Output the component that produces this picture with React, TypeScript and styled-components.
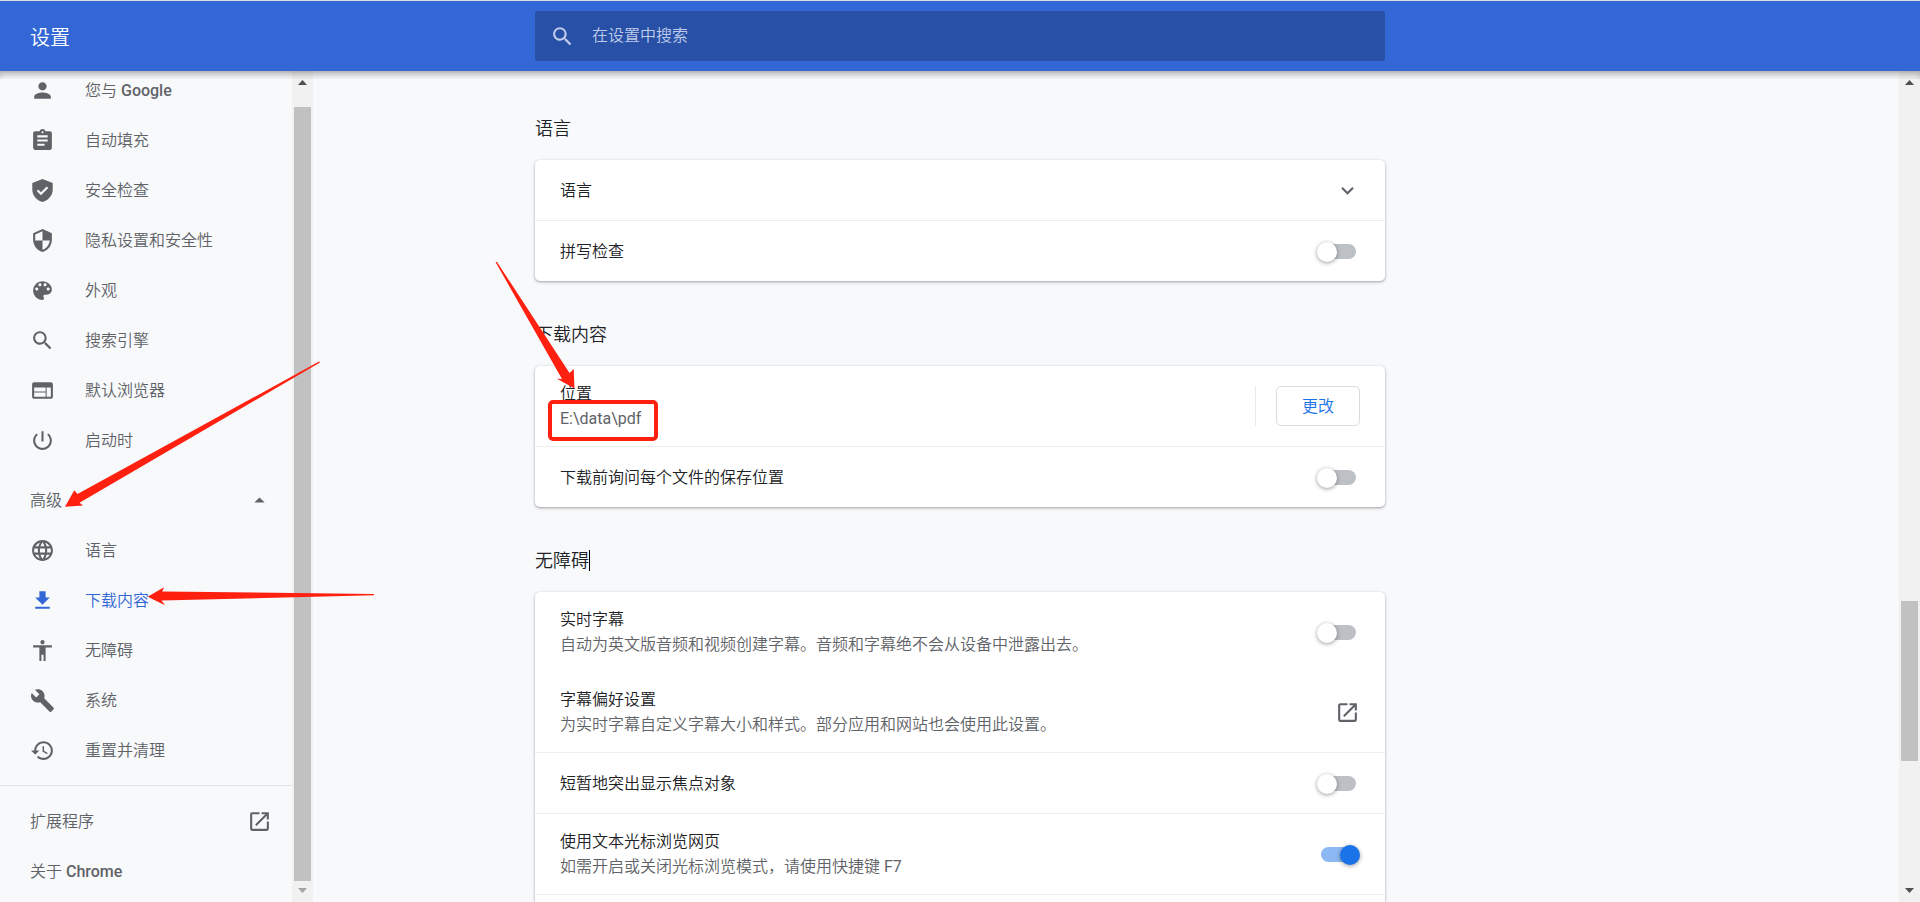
import React from 'react';
import styled, { createGlobalStyle, css } from 'styled-components';

const GlobalStyle = createGlobalStyle`
  *, *::before, *::after { box-sizing: border-box; }
  body {
    margin: 0;
    background: #f8f9fb;
    color: #202124;
    font-family: Roboto, "Noto Sans CJK SC DemiLight", "Noto Sans CJK SC Light", "Noto Sans CJK SC", sans-serif;
    font-size: 16px;
    line-height: 25px;
  }
  h1, h2, p { margin: 0; font-weight: 400; }
  a { color: inherit; text-decoration: none; }
  button, input { font: inherit; }
`;

const columns = css`
  display: grid;
  grid-template-columns: minmax(313px, 1fr) minmax(0, 850px) minmax(21px, 1fr);
`;

const Page = styled.div`
  position: relative;
  display: flex;
  flex-direction: column;
  height: 100vh;
  overflow: hidden;
`;

const Toolbar = styled.header`
  ${columns}
  flex: none;
  height: 71px;
  padding: 10px 0;
  border-top: 1px solid #dcdfe4;
  background: #3367d6;
  color: #fff;
`;

const Title = styled.h1`
  align-self: center;
  padding: 5px 30px 0;
  font-size: 20px;
`;

const SearchBox = styled.label`
  display: flex;
  align-items: center;
  gap: 17px;
  height: 50px;
  padding: 0 15px;
  border-radius: 3px;
  background: #2850a7;
  color: #bfcceb;
`;

const SearchInput = styled.input`
  flex: 1;
  min-width: 0;
  padding: 0 0 2px;
  border: 0;
  outline: 0;
  background: none;
  color: #fff;
  &::placeholder { color: #bfcceb; opacity: 1; }
`;

const Body = styled.div`
  ${columns}
  position: relative;
  flex: 1;
  min-height: 0;
`;

const TopShadow = styled.div`
  position: absolute;
  top: 0;
  left: 0;
  right: 0;
  height: 8px;
  box-shadow: inset 0 6px 8px -4px rgba(0, 0, 0, 0.4);
`;

const Sidebar = styled.aside`
  display: flex;
  width: 313px;
  min-height: 0;
`;

const Menu = styled.nav`
  flex: 1;
  overflow: hidden;
  color: #5f6368;
  font-weight: 500;
`;

const MenuGroup = styled.div<{ $scrolled?: boolean }>`
  margin-top: ${(p) => (p.$scrolled ? '-6px' : '0')};
  padding-bottom: 10px;
`;

const MenuLink = styled.a<{ $active?: boolean }>`
  display: flex;
  align-items: center;
  gap: 30px;
  height: 50px;
  padding: 0 20px 0 30px;
  color: ${(p) => (p.$active ? '#3367d6' : 'inherit')};
`;

const MenuToggle = styled.button`
  display: flex;
  align-items: center;
  justify-content: space-between;
  width: 100%;
  height: 50px;
  padding: 0 20px 0 30px;
  border: 0;
  background: none;
  color: inherit;
  text-align: left;
`;

const FooterLinks = styled.div`
  padding-top: 10px;
  border-top: 1px solid #e1e3e6;
`;

const FooterLink = styled(MenuLink)`
  justify-content: space-between;
`;

const ScrollTrack = styled.div`
  display: flex;
  flex-direction: column;
  align-items: center;
  flex: none;
  width: 21px;
  height: 100%;
  background: #f1f1f1;
`;

const ScrollSide = styled.div`
  display: flex;
  justify-content: flex-end;
  min-height: 0;
`;

const ScrollArrow = styled.div<{ $down?: boolean; $muted?: boolean }>`
  display: flex;
  align-items: center;
  justify-content: center;
  flex: none;
  width: 21px;
  height: 21px;
  padding-top: 2px;
  color: ${(p) => (p.$muted ? '#a3a3a3' : '#505050')};
  transform: ${(p) => (p.$down ? 'rotate(180deg)' : 'none')};
`;

const ScrollGap = styled.div<{ $grow: number }>`
  flex: ${(p) => p.$grow} 1 0;
`;

const ScrollThumb = styled(ScrollGap)`
  width: 17px;
  background: #c1c1c1;
`;

const Content = styled.main`
  min-width: 0;
  min-height: 0;
  overflow: hidden;
  margin: 0 -4px;
  padding: 4px 4px 0;
`;

const SectionTitle = styled.h2`
  display: flex;
  align-items: center;
  height: 85px;
  padding-top: 21px;
  font-size: 18px;
`;

const Caret = styled.span`
  width: 1px;
  height: 21px;
  background: #000;
`;

const Card = styled.div<{ $continues?: boolean }>`
  padding-bottom: ${(p) => (p.$continues ? '60px' : '0')};
  border-radius: 5px;
  background: #fff;
  box-shadow: 0 1px 2px 0 rgba(60, 64, 67, 0.3), 0 1px 3px 1px rgba(60, 64, 67, 0.15);
`;

const Row = styled.div<{ $line?: boolean; $tall?: boolean }>`
  display: flex;
  align-items: center;
  justify-content: space-between;
  box-sizing: content-box;
  min-height: ${(p) => (p.$tall ? '80px' : '60px')};
  padding: 0 25px;
  border-bottom: ${(p) => (p.$line ? '1px solid #ededed' : '0')};
`;

const RowText = styled.label`
  display: flex;
  flex-direction: column;
`;

const Secondary = styled.span`
  color: #5f6368;
`;

const IconButton = styled.button`
  display: flex;
  padding: 0;
  border: 0;
  background: none;
  color: #5f6368;
`;

const ButtonGroup = styled.div`
  display: flex;
  gap: 20px;
  height: 40px;
`;

const Separator = styled.div`
  width: 1px;
  background: #e8eaed;
`;

const ChangeButton = styled.button`
  padding: 0 25px;
  border: 1px solid #dadce0;
  border-radius: 5px;
  background: #fff;
  color: #1a73e8;
  font-weight: 500;
`;

const Switch = styled.input`
  appearance: none;
  position: relative;
  flex: none;
  width: 35px;
  height: 15px;
  margin: 0 4px 0 0;
  border-radius: 8px;
  background: #bdc1c6;
  &::after {
    content: '';
    position: absolute;
    top: -2px;
    left: -4px;
    width: 20px;
    height: 20px;
    border-radius: 50%;
    background: #fff;
    box-shadow: 0 1px 4px rgba(0, 0, 0, 0.4);
  }
  &:checked { background: #8cb8f3; }
  &:checked::after {
    left: 19px;
    background: #1a73e8;
  }
`;

const Marks = styled.svg`
  position: absolute;
  inset: 0;
  width: 100%;
  height: 100%;
  pointer-events: none;
`;

const Svg = styled.svg`
  flex: none;
  width: 25px;
  height: 25px;
  fill: currentColor;
`;

const icons = {
  person: 'M12 12c2.21 0 4-1.79 4-4s-1.79-4-4-4-4 1.79-4 4 1.79 4 4 4zm0 2c-2.67 0-8 1.34-8 4v2h16v-2c0-2.66-5.33-4-8-4z',
  autofill: 'M19 3h-4.18C14.4 1.84 13.3 1 12 1c-1.3 0-2.4.84-2.82 2H5c-1.1 0-2 .9-2 2v14c0 1.1.9 2 2 2h14c1.1 0 2-.9 2-2V5c0-1.1-.9-2-2-2zm-7 0c.55 0 1 .45 1 1s-.45 1-1 1-1-.45-1-1 .45-1 1-1zm2 14H7v-2h7v2zm3-4H7v-2h10v2zm0-4H7V7h10v2z',
  safety: 'M12 1L2.2 4.7v6.6c0 5.3 4.2 10.3 9.8 11.7 5.6-1.4 9.8-6.4 9.8-11.7V4.7L12 1zm-1.500 15.500l-4-4 1.400-1.400 2.600 2.600 5.600-5.600 1.400 1.400-7 7z',
  privacy: 'M12 1L3 5v6c0 5.550 3.840 10.740 9 12 5.160-1.260 9-6.450 9-12V5l-9-4zm0 10.990h7c-.53 4.120-3.280 7.790-7 8.940V12H5V6.300l7-3.110v8.800z',
  palette: 'M12 3c-4.970 0-9 4.030-9 9s4.030 9 9 9c.83 0 1.500-.67 1.500-1.500 0-.39-.15-.74-.39-1.010-.23-.26-.38-.61-.38-.99 0-.83.67-1.500 1.500-1.500H16c2.760 0 5-2.240 5-5 0-4.420-4.030-8-9-8zm-5.500 9c-.83 0-1.500-.67-1.500-1.500S5.670 9 6.500 9 8 9.670 8 10.500 7.330 12 6.500 12zm3-4C8.670 8 8 7.330 8 6.500S8.670 5 9.500 5s1.500.67 1.500 1.500S10.330 8 9.500 8zm5 0c-.83 0-1.500-.67-1.500-1.500S13.670 5 14.500 5s1.500.67 1.500 1.500S15.330 8 14.500 8zm3 4c-.83 0-1.500-.67-1.500-1.500S16.670 9 17.500 9s1.500.67 1.500 1.500-.67 1.500-1.500 1.500z',
  search: 'M15.500 14h-.79l-.28-.27C15.410 12.590 16 11.110 16 9.500 16 5.910 13.090 3 9.500 3S3 5.910 3 9.500 5.910 16 9.500 16c1.610 0 3.090-.59 4.230-1.570l.27.28v.79l5 4.990L20.490 19l-4.990-5zm-6 0C7.010 14 5 11.990 5 9.500S7.010 5 9.500 5 14 7.010 14 9.500 11.990 14 9.500 14z',
  browser: 'M20 4H4c-1.100 0-1.990.9-1.990 2L2 18c0 1.100.9 2 2 2h16c1.100 0 2-.9 2-2V6c0-1.100-.9-2-2-2zm-5 14H4v-4h11v4zm0-5H4V9h11v4zm5 5h-4V9h4v9z',
  power: 'M13 3h-2v10h2V3zm4.830 2.170l-1.420 1.420C17.990 7.860 19 9.810 19 12c0 3.870-3.130 7-7 7s-7-3.130-7-7c0-2.190 1.010-4.140 2.580-5.420L6.170 5.170C4.230 6.820 3 9.260 3 12c0 4.970 4.030 9 9 9s9-4.030 9-9c0-2.740-1.230-5.180-3.170-6.830z',
  language: 'M11.990 2C6.470 2 2 6.480 2 12s4.470 10 9.990 10C17.520 22 22 17.520 22 12S17.520 2 11.990 2zm6.930 6h-2.950c-.32-1.250-.78-2.450-1.380-3.560 1.840.63 3.370 1.910 4.330 3.560zM12 4.040c.83 1.200 1.480 2.530 1.910 3.960h-3.820c.43-1.430 1.080-2.760 1.910-3.960zM4.260 14C4.100 13.360 4 12.690 4 12s.1-1.360.26-2h3.380c-.08.66-.14 1.320-.14 2 0 .68.06 1.340.14 2H4.260zm.82 2h2.950c.32 1.250.78 2.450 1.380 3.560-1.840-.63-3.370-1.900-4.330-3.560zm2.950-8H5.080c.96-1.660 2.490-2.930 4.330-3.560C8.810 5.550 8.350 6.750 8.030 8zM12 19.960c-.83-1.200-1.480-2.530-1.910-3.960h3.820c-.43 1.430-1.080 2.760-1.910 3.960zM14.340 14H9.660c-.09-.66-.16-1.320-.16-2 0-.68.07-1.350.16-2h4.680c.09.65.16 1.320.16 2 0 .68-.07 1.340-.16 2zm.25 5.560c.6-1.110 1.060-2.310 1.380-3.560h2.950c-.96 1.650-2.490 2.930-4.330 3.560zM16.360 14c.08-.66.14-1.320.14-2 0-.68-.06-1.340-.14-2h3.380c.16.64.26 1.310.26 2s-.1 1.360-.26 2h-3.380z',
  download: 'M19 9h-4V3H9v6H5l7 7 7-7zM5 18v2h14v-2H5z',
  accessibility: 'M12 2c1.100 0 2 .9 2 2s-.9 2-2 2-2-.9-2-2 .9-2 2-2zm9 7h-6v13h-2v-6h-2v6H9V9H3V7h18v2z',
  system: 'M22.700 19l-9.100-9.100c.9-2.300.4-5-1.500-6.900-2-2-5-2.400-7.400-1.300L9 6 6 9 1.600 4.700C.4 7.100.9 10.100 2.900 12.100c1.900 1.900 4.600 2.400 6.900 1.500l9.100 9.100c.4.4 1 .4 1.400 0l2.300-2.300c.5-.4.5-1.100.1-1.400z',
  reset: 'M13 3c-4.970 0-9 4.030-9 9H1l3.890 3.890.07.14L9 12H6c0-3.870 3.130-7 7-7s7 3.130 7 7-3.130 7-7 7c-1.930 0-3.680-.79-4.940-2.060l-1.420 1.420C8.270 19.990 10.510 21 13 21c4.970 0 9-4.030 9-9s-4.030-9-9-9zm-1 5v5l4.280 2.540.72-1.210-3.500-2.080V8H12z',
  dropUp: 'M7 14l5-5 5 5z',
  external: 'M19 19H5V5h7V3H5c-1.110 0-2 .9-2 2v14c0 1.100.89 2 2 2h14c1.100 0 2-.9 2-2v-7h-2v7zM14 3v2h3.590l-9.830 9.830 1.410 1.410L19 6.410V10h2V3h-7z',
  chevron: 'M7.410 8.590L12 13.170l4.590-4.580L18 10l-6 6-6-6z',
};

type IconName = keyof typeof icons;

const Icon = ({ name }: { name: IconName }) => (
  <Svg viewBox="0 0 24 24" aria-hidden="true">
    <path d={icons[name]} />
  </Svg>
);

type MenuEntry = { icon: IconName; label: string; active?: boolean };

const basicMenu: MenuEntry[] = [
  { icon: 'person', label: '您与 Google' },
  { icon: 'autofill', label: '自动填充' },
  { icon: 'safety', label: '安全检查' },
  { icon: 'privacy', label: '隐私设置和安全性' },
  { icon: 'palette', label: '外观' },
  { icon: 'search', label: '搜索引擎' },
  { icon: 'browser', label: '默认浏览器' },
  { icon: 'power', label: '启动时' },
];

const advancedMenu: MenuEntry[] = [
  { icon: 'language', label: '语言' },
  { icon: 'download', label: '下载内容', active: true },
  { icon: 'accessibility', label: '无障碍' },
  { icon: 'system', label: '系统' },
  { icon: 'reset', label: '重置并清理' },
];

const MenuItems = ({ entries }: { entries: MenuEntry[] }) => (
  <>
    {entries.map((e) => (
      <MenuLink key={e.label} href="#" $active={e.active}>
        <Icon name={e.icon} />
        {e.label}
      </MenuLink>
    ))}
  </>
);

const Arrow = () => (
  <svg width="9" height="5" viewBox="0 0 9 5" fill="currentColor" aria-hidden="true">
    <path d="M4.500 0L9 5H0z" />
  </svg>
);

type ScrollbarProps = { before: number; thumb: number; after: number; atEnd?: boolean };

const Scrollbar = ({ before, thumb, after, atEnd }: ScrollbarProps) => (
  <ScrollTrack>
    <ScrollArrow><Arrow /></ScrollArrow>
    <ScrollGap $grow={before} />
    <ScrollThumb $grow={thumb} />
    <ScrollGap $grow={after} />
    <ScrollArrow $down $muted={atEnd}><Arrow /></ScrollArrow>
  </ScrollTrack>
);

type SettingProps = {
  id: string;
  title: string;
  detail?: string;
  line?: boolean;
  children: React.ReactNode;
};

const Setting = ({ id, title, detail, line, children }: SettingProps) => (
  <Row $line={line} $tall={Boolean(detail)}>
    <RowText htmlFor={id}>
      <span>{title}</span>
      {detail && <Secondary>{detail}</Secondary>}
    </RowText>
    {children}
  </Row>
);

export default function App() {
  return (
    <>
      <GlobalStyle />
      <Page>
        <Toolbar>
          <Title>设置</Title>
          <SearchBox>
            <Icon name="search" />
            <SearchInput type="text" placeholder="在设置中搜索" aria-label="在设置中搜索" />
          </SearchBox>
        </Toolbar>
        <Body>
          <Sidebar>
            <Menu>
              <MenuGroup $scrolled>
                <MenuItems entries={basicMenu} />
              </MenuGroup>
              <MenuGroup>
                <MenuToggle type="button" aria-expanded="true">
                  高级
                  <Icon name="dropUp" />
                </MenuToggle>
                <MenuItems entries={advancedMenu} />
              </MenuGroup>
              <FooterLinks>
                <FooterLink href="#">
                  扩展程序
                  <Icon name="external" />
                </FooterLink>
                <FooterLink href="#">关于 Chrome</FooterLink>
              </FooterLinks>
            </Menu>
            <Scrollbar before={15} thumb={775} after={0} atEnd />
          </Sidebar>
          <Content>
            <section>
              <SectionTitle>语言</SectionTitle>
              <Card>
                <Setting id="languages" title="语言" line>
                  <IconButton id="languages" type="button">
                    <Icon name="chevron" />
                  </IconButton>
                </Setting>
                <Setting id="spelling" title="拼写检查">
                  <Switch id="spelling" type="checkbox" />
                </Setting>
              </Card>
            </section>
            <section>
              <SectionTitle>下载内容</SectionTitle>
              <Card>
                <Setting id="location" title="位置" detail="E:\data\pdf" line>
                  <ButtonGroup>
                    <Separator />
                    <ChangeButton id="location" type="button">更改</ChangeButton>
                  </ButtonGroup>
                </Setting>
                <Setting id="ask" title="下载前询问每个文件的保存位置">
                  <Switch id="ask" type="checkbox" />
                </Setting>
              </Card>
            </section>
            <section>
              <SectionTitle>
                无障碍
                <Caret />
              </SectionTitle>
              <Card $continues>
                <Setting
                  id="captions"
                  title="实时字幕"
                  detail="自动为英文版音频和视频创建字幕。音频和字幕绝不会从设备中泄露出去。"
                >
                  <Switch id="captions" type="checkbox" />
                </Setting>
                <Setting
                  id="caption-style"
                  title="字幕偏好设置"
                  detail="为实时字幕自定义字幕大小和样式。部分应用和网站也会使用此设置。"
                  line
                >
                  <IconButton id="caption-style" type="button">
                    <Icon name="external" />
                  </IconButton>
                </Setting>
                <Setting id="focus" title="短暂地突出显示焦点对象" line>
                  <Switch id="focus" type="checkbox" />
                </Setting>
                <Setting
                  id="caret"
                  title="使用文本光标浏览网页"
                  detail="如需开启或关闭光标浏览模式，请使用快捷键 F7"
                  line
                >
                  <Switch id="caret" type="checkbox" defaultChecked />
                </Setting>
              </Card>
            </section>
          </Content>
          <ScrollSide>
            <Scrollbar before={509} thumb={160} after={120} />
          </ScrollSide>
          <TopShadow />
        </Body>
        <Marks fill="#ff2010" aria-hidden="true">
          <path d="M319 361.500L77.500 494 74.300 490.300 65 506.700 83 505.500 79.500 502.700 320 362.500z" />
          <path d="M374 594L162.300 591.500 164 587.300 147.700 596.700 165 605.300 161.500 600.500 374 595.300z" />
          <path d="M495.500 262L562 379 557 378.700 574.500 388.500 573.700 369 569.500 373 497 262z" />
          <rect x="550" y="402" width="106" height="37" rx="3" fill="none" stroke="#ff2010" strokeWidth="4" />
        </Marks>
      </Page>
    </>
  );
}
